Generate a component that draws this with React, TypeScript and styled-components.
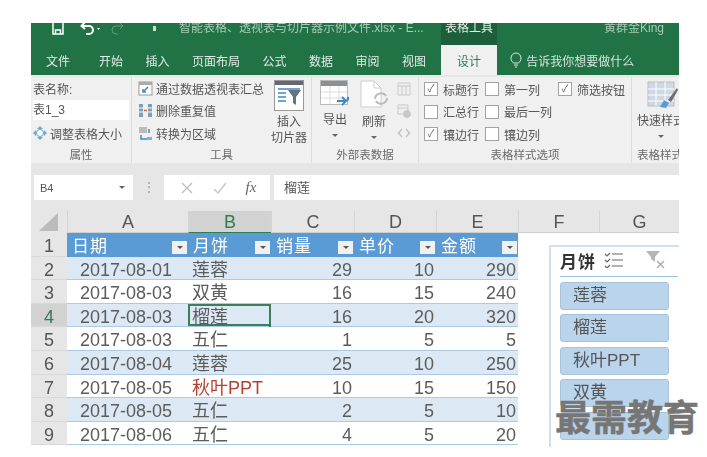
import React from "react";
import styled, { createGlobalStyle } from "styled-components";

const GlobalStyle = createGlobalStyle`
  html, body {
    margin: 0;
    background: #fff;
  }
`;

const FONT = `"Liberation Sans", "Noto Sans CJK SC", sans-serif`;

const columns = ["A", "B", "C", "D", "E", "F", "G"];
const headers = ["日期", "月饼", "销量", "单价", "金额"];
const rows = [
  ["2017-08-01", "莲蓉", "29", "10", "290"],
  ["2017-08-03", "双黄", "16", "15", "240"],
  ["2017-08-03", "榴莲", "16", "20", "320"],
  ["2017-08-03", "五仁", "1", "5", "5"],
  ["2017-08-04", "莲蓉", "25", "10", "250"],
  ["2017-08-05", "秋叶PPT", "10", "15", "150"],
  ["2017-08-05", "五仁", "2", "5", "10"],
  ["2017-08-06", "五仁", "4", "5", "20"],
];
// last button is hidden behind the watermark in the picture, no label readable
const slicerItems = ["莲蓉", "榴莲", "秋叶PPT", "双黄", ""];
const tabs = ["文件", "开始", "插入", "页面布局", "公式", "数据", "审阅", "视图"];

const App: React.FC = () => {
  return (
    <>
      <GlobalStyle />
      <Frame>
        <TitleBar>
          <QuickAccess>
            <svg width="14" height="14" viewBox="0 0 14 14" fill="none" stroke="#fff" strokeWidth="1.5">
              <path d="M2 1v12h10V1M4.500 13V9h5v4" />
            </svg>
            <svg width="22" height="14" viewBox="0 0 22 14" fill="none" stroke="#fff" strokeWidth="2">
              <path d="M2 5h7a4 4 0 0 1 0 8H6M5 1L1.500 5 5 8" />
              <path d="M17 7h3l-1.500 2z" fill="#fff" stroke="none" />
            </svg>
            <svg width="22" height="14" viewBox="0 0 22 14" fill="none" stroke="#5f9c7c" strokeWidth="1">
              <path d="M12 5H6a4 4 0 0 0 0 8h2M10 2l3 3-3 3" />
            </svg>
            <Dot />
          </QuickAccess>
          <DocTitle>智能表格、透视表与切片器示例文件.xlsx - E...</DocTitle>
          <ToolsTab>表格工具</ToolsTab>
          <UserName>黄群金King</UserName>
        </TitleBar>
        <TabBar>
          {tabs.map((t) => (
            <Tab key={t}>{t}</Tab>
          ))}
          <ActiveTab>设计</ActiveTab>
          <TellMe>
            <svg width="12" height="16" viewBox="0 0 12 16" fill="none" stroke="#dbe8e0" strokeWidth="1">
              <path d="M3.500 11C2 9.500 1 8.500 1 6a5 5 0 0 1 10 0c0 2.500-1 3.500-2.500 5zM4 13h4M5 15h2" />
            </svg>
            告诉我你想要做什么
          </TellMe>
        </TabBar>
        <Ribbon>
          <Group $w={101}>
            <GroupBody>
              <NameColumn>
                <span>表名称:</span>
                <NameInput>表1_3</NameInput>
                <SmallAction>
                  <svg width="14" height="14" viewBox="0 0 14 14" fill="#6fa8c9">
                    <path d="M7 0l3 3H4zM7 14l3-3H4zM0 7l3-3v6zM14 7l-3-3v6z" />
                    <circle cx="7" cy="7" r="3.500" fill="#fff" stroke="#6fa8c9" />
                  </svg>
                  调整表格大小
                </SmallAction>
              </NameColumn>
            </GroupBody>
            <GroupLabel>属性</GroupLabel>
          </Group>
          <Group $w={180}>
            <GroupBody>
              <ActionList>
                <SmallAction>
                  <svg width="15" height="15" viewBox="0 0 15 15">
                    <rect x="1" y="1" width="13" height="13" fill="#fff" stroke="#999" />
                    <rect x="1" y="1" width="13" height="3" fill="#aaa" />
                    <path d="M5 11l5-5M5 8v3h3" fill="none" stroke="#3f87c5" strokeWidth="1.500" />
                  </svg>
                  通过数据透视表汇总
                </SmallAction>
                <SmallAction>
                  <svg width="15" height="15" viewBox="0 0 15 15">
                    <path d="M1 1h4v13H1zM10 1h4v13h-4z" fill="#7f9cb8" />
                    <path d="M1 5h4M1 9h4M10 5h4M10 9h4" stroke="#fff" />
                    <path d="M6 7.500h3" stroke="#c0703a" strokeWidth="1.500" />
                  </svg>
                  删除重复值
                </SmallAction>
                <SmallAction>
                  <svg width="15" height="15" viewBox="0 0 15 15" fill="none">
                    <path d="M1 1h8v6H1z" fill="#bbb" />
                    <path d="M3 9v4h6M11 7V3" stroke="#3f87c5" strokeWidth="1.500" />
                    <path d="M9 11h5v3H9z" fill="#7fb0d8" />
                  </svg>
                  转换为区域
                </SmallAction>
              </ActionList>
              <BigButton $w={44}>
                <svg width="30" height="31" viewBox="0 0 30 31">
                  <rect x="0.500" y="0.500" width="29" height="30" fill="#fff" stroke="#999" />
                  <rect x="1" y="1" width="28" height="4" fill="#667" />
                  <path d="M4 9h22M4 13h8M4 17h8M4 21h8" stroke="#6aa6d8" strokeWidth="2" />
                  <path d="M14 10h13l-5 7v8l-3-2v-6z" fill="#66727f" />
                </svg>
                <BigLabel>插入<br />切片器</BigLabel>
              </BigButton>
            </GroupBody>
            <GroupLabel>工具</GroupLabel>
          </Group>
          <Group $w={107}>
            <ExternalBody>
              <BigButton $w={38}>
                <svg width="30" height="29" viewBox="0 0 30 29">
                  <rect x="0.500" y="0.500" width="27" height="24" fill="#fff" stroke="#bbb" />
                  <rect x="1" y="1" width="26" height="5" fill="#8a8f98" />
                  <path d="M1 12h26M1 18h26M10 6v18M19 6v18" stroke="#ddd" />
                  <path d="M17 21h8a3 3 0 0 0 3-4M22 17l4 4-4 4" fill="none" stroke="#3f87c5" strokeWidth="2" />
                </svg>
                <BigLabel>导出<Caret /></BigLabel>
              </BigButton>
              <BigButton $w={40}>
                <svg width="30" height="31" viewBox="0 0 30 31" fill="none">
                  <path d="M2 1h13l7 7v19H2z" fill="#fff" stroke="#ccc" />
                  <path d="M15 1v7h7" stroke="#ccc" />
                  <path d="M16 19a6 6 0 0 1 11-3M28 18a6 6 0 0 1-11 3" stroke="#bbb" strokeWidth="2" />
                </svg>
                <BigLabel>刷新<Caret /></BigLabel>
              </BigButton>
              <MutedIcons>
                <svg width="14" height="14" viewBox="0 0 14 14" fill="none" stroke="#c8c8c8"><path d="M1 1h12v12H1zM1 4h12M5 4v9M9 4v9" /></svg>
                <svg width="14" height="14" viewBox="0 0 14 14" fill="none" stroke="#c8c8c8"><path d="M1 1h10v9H1zM1 4h10" /><circle cx="10" cy="10" r="3.500" fill="#c8c8c8" /></svg>
                <svg width="14" height="14" viewBox="0 0 14 14" fill="none" stroke="#c4c4c4" strokeWidth="1.500"><path d="M5 3L1.500 7 5 11M9 3l3.500 4L9 11" /></svg>
              </MutedIcons>
            </ExternalBody>
            <GroupLabel>外部表数据</GroupLabel>
          </Group>
          <Group $w={213}>
            <GroupBody>
              <OptionGrid>
                <Option $checked>标题行</Option>
                <Option>第一列</Option>
                <Option $checked>筛选按钮</Option>
                <Option>汇总行</Option>
                <Option>最后一列</Option>
                <span />
                <Option $checked>镶边行</Option>
                <Option>镶边列</Option>
              </OptionGrid>
            </GroupBody>
            <GroupLabel>表格样式选项</GroupLabel>
          </Group>
          <LastGroup>
            <GroupBody>
              <QuickStyle>
                <svg width="32" height="30" viewBox="0 0 32 30">
                  <rect x="2" y="2" width="26" height="24" fill="#cfd9e6" stroke="#bbb" />
                  <path d="M2 9h26M2 15h26M2 21h26M10 2v24M19 2v24" stroke="#fff" />
                  <path d="M14 27l4-7 5 3-3 5z" fill="#5b9bd5" />
                  <path d="M22 20l9-12 1 2-7 12z" fill="#6d6d6d" />
                </svg>
                <BigLabel>快速样式<Caret /></BigLabel>
              </QuickStyle>
            </GroupBody>
            <GroupLabel $left>表格样式</GroupLabel>
          </LastGroup>
        </Ribbon>
        <FormulaArea>
          <NameBox>
            B4
            <Caret />
          </NameBox>
          <Grip>⋮</Grip>
          <FxBox>
            <svg width="14" height="14" viewBox="0 0 14 14" stroke="#bdbdbd" strokeWidth="1.300"><path d="M2 2l10 10M12 2L2 12" /></svg>
            <svg width="14" height="14" viewBox="0 0 14 14" fill="none" stroke="#c8c8c8" strokeWidth="1.500"><path d="M1 8l4 4 8-10" /></svg>
            <FxText>fx</FxText>
          </FxBox>
          <FormulaInput>榴莲</FormulaInput>
        </FormulaArea>
        <SheetArea>
          <Sheet>
            <Corner>
              <svg width="20" height="18" viewBox="0 0 20 18"><path d="M19 0v18H0z" fill="#bcbcbc" /></svg>
            </Corner>
            {columns.map((c) => (
              <ColHead key={c} $active={c === "B"}>{c}</ColHead>
            ))}
            <RowHead>1</RowHead>
            {headers.map((h) => (
              <HeaderCell key={h}>
                {h}
                <FilterBtn />
              </HeaderCell>
            ))}
            <BlankCell />
            <BlankCell />
            {rows.map((row, i) => (
              <React.Fragment key={i}>
                <RowHead $active={i === 2}>{i + 2}</RowHead>
                {row.map((val, j) => (
                  <Cell
                    key={j}
                    $band={i % 2 === 0}
                    $right={j >= 2}
                    $date={j === 0}
                    $red={val === "秋叶PPT"}
                    $selected={i === 2 && j === 1}
                  >
                    {val}
                  </Cell>
                ))}
                <BlankCell />
                <BlankCell />
              </React.Fragment>
            ))}
          </Sheet>
          <Slicer>
            <SlicerHead>
              <SlicerTitle>月饼</SlicerTitle>
              <svg width="20" height="16" viewBox="0 0 20 16" fill="none" stroke="#666" strokeWidth="1.200">
                <path d="M8 2h11M8 8h11M8 14h11M1 2l2 2 3-3M1 8l2 2 3-3M1 14l2 2 3-3" />
              </svg>
              <svg width="20" height="18" viewBox="0 0 20 18">
                <path d="M0 0h14l-5 6v5l-4-3V6z" fill="#b5b5b5" />
                <path d="M11 10l7 7M18 10l-7 7" stroke="#a8a8a8" strokeWidth="1.300" />
              </svg>
            </SlicerHead>
            <SlicerList>
              {slicerItems.map((s, i) => (
                <SlicerItem key={i}>{s}</SlicerItem>
              ))}
            </SlicerList>
          </Slicer>
        </SheetArea>
      </Frame>
      <Watermark>最需教育</Watermark>
    </>
  );
};

const Frame = styled.div`
  width: 648px;
  height: 424px;
  margin: 23px 0 0 31px;
  overflow: hidden;
  font-family: ${FONT};
  font-size: 12px;
  color: #555;
  filter: blur(0.6px);
  display: flex;
  flex-direction: column;
`;

const TitleBar = styled.div`
  height: 22px;
  flex: none;
  background: #217346;
  display: flex;
  color: #a9cbb7;
`;

const QuickAccess = styled.div`
  width: 148px;
  height: 10px;
  flex: none;
  padding-left: 20px;
  box-sizing: border-box;
  display: flex;
  align-items: center;
  gap: 8px;
  & > svg {
    flex: none;
  }
  & > svg:first-child {
    margin-right: 7px;
  }
`;

const Dot = styled.span`
  width: 3px;
  height: 5px;
  margin-left: 13px;
  background: #cfe0d6;
`;

const DocTitle = styled.div`
  width: 262px;
  height: 10px;
  line-height: 10px;
  flex: none;
  white-space: nowrap;
`;

const ToolsTab = styled.div`
  width: 56px;
  flex: none;
  background: #1c5f3a;
  color: #e6efe9;
  text-align: center;
  line-height: 10px;
`;

const UserName = styled.div`
  margin-left: 107px;
  line-height: 10px;
  white-space: nowrap;
`;

const TabBar = styled.div`
  height: 30px;
  flex: none;
  background: #217346;
  display: flex;
  align-items: center;
  padding-left: 15px;
  gap: 22.5px;
  color: #e2ece6;
`;

const Tab = styled.div`
  white-space: nowrap;
  &:first-child {
    margin-right: 6.5px;
  }
`;

const ActiveTab = styled.div`
  width: 56px;
  height: 100%;
  margin-left: -7.5px;
  margin-right: -9.5px;
  flex: none;
  background: #f0f0f0;
  color: #2f7d52;
  display: flex;
  align-items: center;
  justify-content: center;
`;

const TellMe = styled.div`
  display: flex;
  align-items: center;
  gap: 4px;
  white-space: nowrap;
  color: #d5e4db;
`;

const Ribbon = styled.div`
  height: 88px;
  flex: none;
  background: #f0f0f0;
  display: flex;
  border-top: 2px solid #e4e9e6;
  box-sizing: border-box;
`;

const Group = styled.div<{ $w: number }>`
  width: ${(p) => p.$w}px;
  flex: none;
  box-sizing: border-box;
  border-right: 1px solid #dcdcdc;
  display: flex;
  flex-direction: column;
`;

const LastGroup = styled(Group).attrs({ $w: 47 })`
  border-right: none;
  overflow: hidden;
`;

const GroupBody = styled.div`
  flex: 1;
  display: flex;
  min-height: 0;
`;

const ExternalBody = styled(GroupBody)`
  padding-left: 4px;
`;

const GroupLabel = styled.div<{ $left?: boolean }>`
  height: 16px;
  flex: none;
  line-height: 16px;
  text-align: ${(p) => (p.$left ? "left" : "center")};
  padding-left: ${(p) => (p.$left ? "5px" : "0")};
  white-space: nowrap;
  color: #6a6a6a;
  font-size: 11.5px;
`;

const NameColumn = styled.div`
  display: flex;
  flex-direction: column;
  padding: 3px 0 0 2px;
  gap: 3px;
`;

const NameInput = styled.div`
  width: 96px;
  height: 20px;
  line-height: 20px;
  background: #fff;
  margin-bottom: 1px;
`;

const SmallAction = styled.div`
  display: flex;
  align-items: center;
  gap: 3px;
  height: 18px;
  white-space: nowrap;
  & > svg {
    flex: none;
  }
`;

const ActionList = styled.div`
  width: 135px;
  flex: none;
  padding: 2px 0 0 6px;
  box-sizing: border-box;
  display: flex;
  flex-direction: column;
  gap: 4.5px;
`;

const BigButton = styled.div<{ $w: number }>`
  width: ${(p) => p.$w}px;
  flex: none;
  display: flex;
  flex-direction: column;
  align-items: center;
  padding-top: 3px;
  gap: 3px;
  text-align: center;
  & > svg {
    flex: none;
  }
`;

const QuickStyle = styled.div`
  display: flex;
  flex-direction: column;
  padding: 3px 0 0 5px;
  gap: 3px;
  white-space: nowrap;
  & > svg {
    flex: none;
    margin-left: 9px;
  }
`;

const BigLabel = styled.div`
  line-height: 16px;
`;

const Caret = styled.span`
  display: block;
  width: 0;
  height: 0;
  margin: 6px auto 0;
  border-left: 3px solid transparent;
  border-right: 3px solid transparent;
  border-top: 3px solid #666;
`;

const MutedIcons = styled.div`
  display: flex;
  flex-direction: column;
  gap: 8px;
  padding: 5px 0 0 3px;
`;

const OptionGrid = styled.div`
  display: grid;
  grid-template-columns: 61px 73px auto;
  grid-auto-rows: 22.5px;
  padding: 1px 0 0 5px;
  align-items: center;
`;

const Option = styled.div<{ $checked?: boolean }>`
  display: flex;
  align-items: center;
  white-space: nowrap;
  &::before {
    content: "${(p) => (p.$checked ? "✓" : "")}";
    width: 12px;
    height: 12px;
    margin-right: 5px;
    background: #fff;
    border: 1px solid #a2a2a2;
    font-size: 10px;
    line-height: 12px;
    text-align: center;
    flex: none;
  }
`;

const FormulaArea = styled.div`
  height: 48px;
  flex: none;
  background: #e6e6e6;
  display: flex;
  align-items: flex-start;
  padding: 12px 0 0 3px;
  box-sizing: border-box;
`;

const NameBox = styled.div`
  width: 99px;
  height: 25px;
  flex: none;
  box-sizing: border-box;
  background: #fff;
  padding: 0 8px 0 6px;
  font-size: 11px;
  display: flex;
  align-items: center;
  justify-content: space-between;
  ${Caret} {
    margin: 0;
  }
`;

const Grip = styled.div`
  width: 31px;
  flex: none;
  text-align: center;
  line-height: 25px;
  color: #999;
`;

const FxBox = styled.div`
  width: 106px;
  height: 25px;
  flex: none;
  background: #fff;
  display: flex;
  align-items: center;
  justify-content: space-around;
  padding: 0 4px 0 6px;
  box-sizing: border-box;
`;

const FxText = styled.span`
  font-family: "Liberation Serif", serif;
  font-style: italic;
  font-size: 15px;
  color: #666;
`;

const FormulaInput = styled.div`
  flex: 1;
  height: 25px;
  line-height: 25px;
  margin-left: 4px;
  padding-left: 10px;
  background: #fff;
  font-size: 13px;
`;

const SheetArea = styled.div`
  position: relative;
  flex: 1;
  min-height: 0;
  background: #fff;
`;

const Sheet = styled.div`
  display: grid;
  grid-template-columns: 36px 121px 83px 83px 82px 82px 81px 80px;
  grid-template-rows: 22px repeat(9, 23.6px);
  font-size: 18px;
`;

const Corner = styled.div`
  background: #e6e6e6;
  display: flex;
  align-items: flex-end;
  justify-content: center;
  padding-bottom: 2px;
  box-sizing: border-box;
  overflow: hidden;
`;

const ColHead = styled.div<{ $active?: boolean }>`
  background: ${(p) => (p.$active ? "#d2d2d2" : "#e6e6e6")};
  color: ${(p) => (p.$active ? "#2f7d52" : "#555")};
  border-left: 1px solid #d4d4d4;
  border-bottom: 1px solid ${(p) => (p.$active ? "#2f7d52" : "#cfcfcf")};
  box-sizing: border-box;
  text-align: center;
  line-height: 22px;
`;

const RowHead = styled.div<{ $active?: boolean }>`
  background: ${(p) => (p.$active ? "#d2d2d2" : "#e6e6e6")};
  color: ${(p) => (p.$active ? "#2f7d52" : "#555")};
  border-bottom: 1px solid #d8d8d8;
  box-sizing: border-box;
  text-align: center;
  line-height: 26px;
`;

const HeaderCell = styled.div`
  background: #5b9bd5;
  color: #fff;
  font-size: 17px;
  padding: 0 1px 0 5px;
  display: flex;
  align-items: center;
  justify-content: space-between;
  letter-spacing: 1px;
`;

const FilterBtn = styled.span`
  position: relative;
  width: 15px;
  height: 13px;
  margin-top: 5px;
  background: #f0f0f0;
  flex: none;
  &::after {
    content: "";
    position: absolute;
    left: 5px;
    top: 5px;
    border-left: 3px solid transparent;
    border-right: 3px solid transparent;
    border-top: 3px solid #555;
  }
`;

const Cell = styled.div<{
  $band?: boolean;
  $right?: boolean;
  $date?: boolean;
  $red?: boolean;
  $selected?: boolean;
}>`
  position: relative;
  background: ${(p) => (p.$band ? "#dce9f5" : "#fff")};
  border-bottom: 1px solid #a9cbe8;
  box-sizing: border-box;
  line-height: 26px;
  white-space: nowrap;
  color: ${(p) => (p.$red ? "#b5402f" : "#5c5c5c")};
  text-align: ${(p) => (p.$right ? "right" : "left")};
  padding: ${(p) => (p.$right ? "0 2px 0 0" : p.$date ? "0 0 0 13px" : "0 0 0 4px")};
  ${(p) => p.$selected && "box-shadow: inset 0 0 0 2px #3d7d58;"}
  ${(p) =>
    p.$selected &&
    `&::after {
      content: "";
      position: absolute;
      right: -2px;
      bottom: -2px;
      width: 4px;
      height: 4px;
      background: #2f7d52;
    }`}
`;

const BlankCell = styled.div`
  background: #fff;
`;

const Slicer = styled.div`
  position: absolute;
  left: 518px;
  top: 34px;
  width: 140px;
  height: 220px;
  box-sizing: border-box;
  background: #fff;
  border: 2px solid #cfe0f1;
  padding: 0 9px;
`;

const SlicerHead = styled.div`
  height: 30px;
  box-sizing: border-box;
  display: flex;
  align-items: center;
  gap: 8px;
  padding-bottom: 3px;
  border-bottom: 1px solid #9dc3e6;
  & > svg:last-child {
    margin-left: 14px;
  }
`;

const SlicerTitle = styled.div`
  font-size: 17px;
  font-weight: bold;
  color: #333;
  letter-spacing: 1px;
`;

const SlicerList = styled.div`
  display: flex;
  flex-direction: column;
  gap: 4.4px;
  margin-top: 5px;
`;

const SlicerItem = styled.div`
  width: 109px;
  height: 28px;
  flex: none;
  box-sizing: border-box;
  background: #bad4ec;
  border: 1px solid #a8c2da;
  border-radius: 3px;
  padding-left: 12px;
  font-size: 17px;
  line-height: 25px;
  color: #555;
`;

const Watermark = styled.div`
  position: absolute;
  left: 555px;
  top: 393px;
  font-family: "Noto Sans CJK SC", sans-serif;
  font-size: 36px;
  font-weight: 700;
  line-height: 44px;
  white-space: nowrap;
  color: #767676;
  -webkit-text-stroke: 0.5px #767676;
`;

export default App;
